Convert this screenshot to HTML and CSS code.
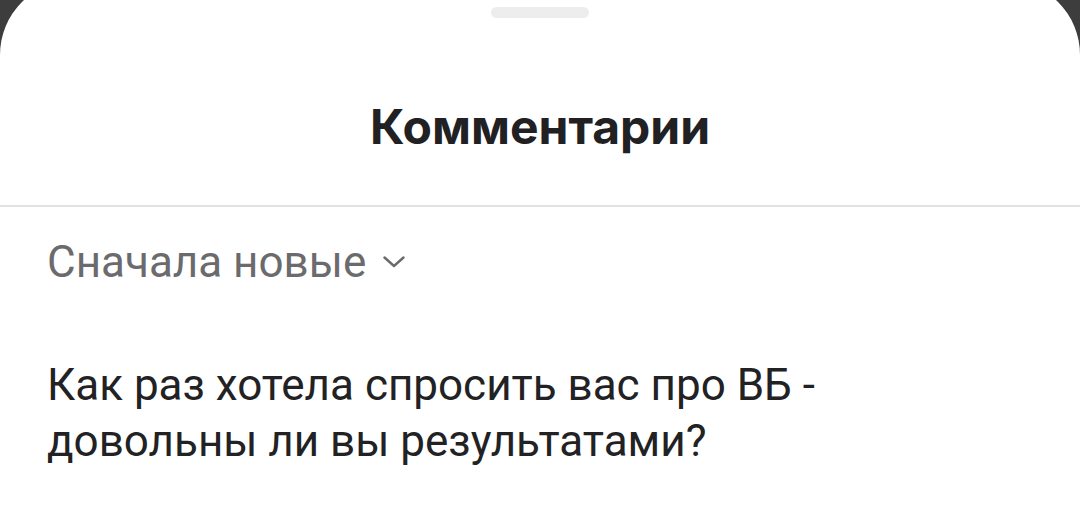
FILE: index.html
```html
<!DOCTYPE html>
<html lang="ru">
<head>
    <meta charset="UTF-8">
    <meta name="viewport" content="width=device-width, initial-scale=1.0">
    <title>Комментарии</title>
    <link rel="stylesheet" href="styles.css">
</head>
<body>
    <div class="sheet">
        <div class="sheet-header">
            <div class="handle"></div>
            <h1 class="sheet-title">Комментарии</h1>
        </div>
        <button class="sort">
            Сначала новые
            <svg class="sort-icon" width="22" height="12" viewBox="0 0 22 12">
                <path d="M1.5 1.5 L11 10 L20.5 1.5" fill="none" stroke="#6b6b6d" stroke-width="2.4" stroke-linecap="round" stroke-linejoin="round"/>
            </svg>
        </button>
        <div class="comment">
            <p class="comment-text">Как раз хотела спросить вас про ВБ - довольны ли вы результатами?</p>
        </div>
    </div>
</body>
</html>
```

FILE: styles.css
```css
body {
    margin: 0;
    background-color: #3d3d3d;
    font-family: Roboto, "Liberation Sans", sans-serif;
    height: 100vh;
    overflow: hidden;
}

.sheet {
    background-color: #fff;
    margin-top: -20px;
    border-radius: 75px 75px 0 0;
    height: 533px;
}

.sheet-header {
    display: flex;
    flex-direction: column;
    align-items: center;
    padding-top: 27px;
    border-bottom: 2px solid #e2e2e2;
    height: 227px;
    box-sizing: border-box;
}

.handle {
    width: 98px;
    height: 11px;
    border-radius: 6px;
    background-color: #ededee;
}

.sheet-title {
    margin: 80px 0 0;
    font-family: Inter, Roboto, sans-serif;
    font-size: 48px;
    font-weight: 700;
    line-height: 58px;
    color: #212124;
}

.sort {
    display: flex;
    align-items: center;
    gap: 17px;
    margin: 29px 0 0 47px;
    padding: 0;
    border: none;
    background: none;
    font-family: Roboto, sans-serif;
    font-size: 44px;
    line-height: 52px;
    color: #6b6b6d;
}

.comment {
    padding: 0 47px;
    margin-top: 69px;
}

.comment-text {
    margin: 0;
    max-width: 800px;
    font-size: 44px;
    line-height: 56px;
    color: #222224;
}
```
